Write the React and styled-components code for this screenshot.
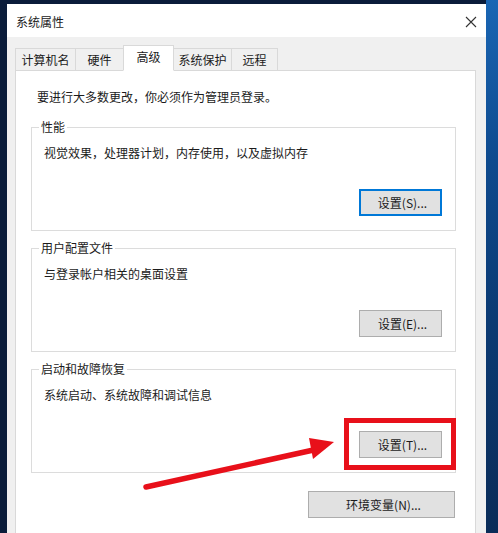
import React from "react";
import styled, { createGlobalStyle } from "styled-components";

const Global = createGlobalStyle`
  html, body { margin: 0; padding: 0; }
  body {
    width: 498px;
    height: 533px;
    overflow: hidden;
    background: #0a1c3a;
    font-family: "Microsoft YaHei", "Noto Sans CJK SC", "Noto Sans", sans-serif;
    font-size: 12px;
    color: #1b1b1b;
  }
`;

const Screen = styled.div`
  position: relative;
  width: 498px;
  height: 533px;
  overflow: hidden;
  background: #0a1c3a;
  &::after {
    content: "";
    position: absolute;
    right: 0;
    top: 0;
    width: 12px;
    height: 533px;
    background: linear-gradient(180deg, #1a66b4 0%, #0e4a8e 30%, #0b3a73 60%, #0a2c58 100%);
  }
`;

const Window = styled.div`
  margin: 4px 0 0 7px;
  width: 479px;
  height: 529px;
  background: #f0f0f0;
  display: flex;
  flex-direction: column;
`;

const TitleBar = styled.div`
  height: 33px;
  background: #ffffff;
  display: flex;
  align-items: center;
  justify-content: space-between;
  padding: 0 9px 0 9px;
  flex-shrink: 0;
`;

const Title = styled.span`
  font-size: 12px;
  line-height: 16px;
  color: #1b1b1b;
  margin-top: 2px;
`;

const Close = styled.svg`
  width: 12px;
  height: 12px;
  margin-top: 2px;
`;

const Body = styled.div`
  padding: 8px 10px 0 8px;
  display: flex;
  flex-direction: column;
`;

const TabStrip = styled.div`
  display: flex;
  align-items: flex-end;
  height: 26px;
  margin-bottom: -1px;
  position: relative;
  z-index: 1;
  padding-left: 1px;
`;

const Tab = styled.div`
  box-sizing: border-box;
  width: ${(p) => p.$w}px;
  height: ${(p) => (p.$active ? 26 : 23)}px;
  margin-left: -1px;
  border: 1px solid #d9d9d9;
  border-bottom: ${(p) => (p.$active ? "1px solid #ffffff" : "1px solid #d9d9d9")};
  background: ${(p) => (p.$active ? "#ffffff" : "#f0f0f0")};
  display: flex;
  align-items: center;
  justify-content: center;
  padding-bottom: ${(p) => (p.$active ? 3 : 0)}px;
  font-size: 12px;
  line-height: 16px;
  color: #1b1b1b;
  position: relative;
  z-index: ${(p) => (p.$active ? 2 : 1)};
`;

const Panel = styled.div`
  background: #ffffff;
  border: 1px solid #d9d9d9;
  height: 470px;
  box-sizing: border-box;
  padding: 18px 19px 0 15px;
  display: flex;
  flex-direction: column;
`;

const Notice = styled.div`
  font-size: 12px;
  line-height: 16px;
  margin: 0 0 14px 6px;
`;

const Group = styled.fieldset`
  margin: 0 0 9px 0;
  padding: 10px 13px 14px 12px;
  border: 1px solid #dcdcdc;
  min-inline-size: 0;
  display: flex;
  flex-direction: column;
`;

const Legend = styled.legend`
  padding: 0 2px;
  margin-left: -5px;
  font-size: 12px;
  line-height: 16px;
  color: #1b1b1b;
`;

const Desc = styled.div`
  font-size: 12px;
  line-height: 16px;
  margin-bottom: 28px;
`;

const ButtonRow = styled.div`
  display: flex;
  justify-content: flex-end;
  margin-right: ${(p) => p.$mr || 0}px;
`;

const Button = styled.button`
  box-sizing: border-box;
  width: ${(p) => p.$w || 83}px;
  height: 27px;
  background: #e1e1e1;
  border: ${(p) => (p.$focus ? "2px solid #0078d7" : "1px solid #adadad")};
  font-family: inherit;
  font-size: 12px;
  line-height: 16px;
  color: #1b1b1b;
  margin: 0;
  display: flex;
  align-items: center;
  justify-content: center;
  padding: 0 0 0 4px;
`;

const EnvRow = styled(ButtonRow)`
  margin-top: 9px;
`;

const Highlight = styled.div`
  position: absolute;
  left: 344px;
  top: 418px;
  width: 112px;
  height: 52px;
  box-sizing: border-box;
  border: 5px solid #e8101a;
  z-index: 5;
`;

const Arrow = styled.svg`
  position: absolute;
  left: 0;
  top: 0;
  width: 498px;
  height: 533px;
  z-index: 6;
  pointer-events: none;
`;

const tabs = [
  { label: "计算机名", w: 61 },
  { label: "硬件", w: 49 },
  { label: "高级", w: 51, active: true },
  { label: "系统保护", w: 59 },
  { label: "远程", w: 47 },
];

const groups = [
  { legend: "性能", desc: "视觉效果，处理器计划，内存使用，以及虚拟内存", btn: "设置(S)...", focus: true },
  { legend: "用户配置文件", desc: "与登录帐户相关的桌面设置", btn: "设置(E)..." },
  { legend: "启动和故障恢复", desc: "系统启动、系统故障和调试信息", btn: "设置(T)..." },
];

export default function App() {
  return (
    <>
      <Global />
      <Screen>
        <Window>
          <TitleBar>
            <Title>系统属性</Title>
            <Close viewBox="0 0 12 12">
              <path d="M1 1 L11 11 M11 1 L1 11" stroke="#333" strokeWidth="1.1" fill="none" />
            </Close>
          </TitleBar>
          <Body>
            <TabStrip>
              {tabs.map((t) => (
                <Tab key={t.label} $w={t.w} $active={t.active}>
                  {t.label}
                </Tab>
              ))}
            </TabStrip>
            <Panel>
              <Notice>要进行大多数更改，你必须作为管理员登录。</Notice>
              {groups.map((g) => (
                <Group key={g.legend}>
                  <Legend>{g.legend}</Legend>
                  <Desc>{g.desc}</Desc>
                  <ButtonRow>
                    <Button $focus={g.focus}>{g.btn}</Button>
                  </ButtonRow>
                </Group>
              ))}
              <EnvRow $mr={1}>
                <Button $w={147}>环境变量(N)...</Button>
              </EnvRow>
            </Panel>
          </Body>
        </Window>
        <Highlight />
        <Arrow viewBox="0 0 498 533">
          <line x1="146" y1="487" x2="318" y2="449" stroke="#e8101a" strokeWidth="5.5" strokeLinecap="round" />
          <polygon points="334,442 309,438 313,459" fill="#e8101a" />
        </Arrow>
      </Screen>
    </>
  );
}
